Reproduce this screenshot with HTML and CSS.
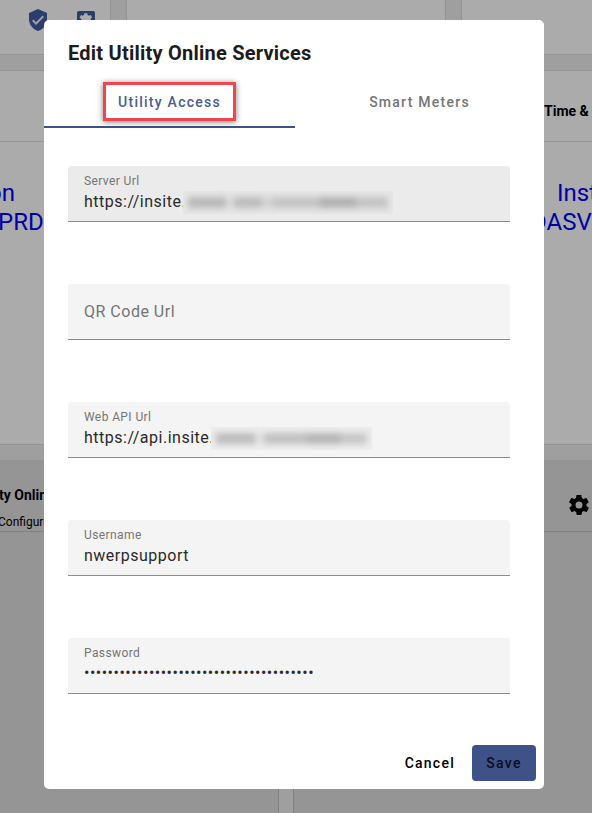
FILE: index.html
```html
<!DOCTYPE html>
<html>
<head>
  <meta charset="utf-8">
  <title>Edit Utility Online Services</title>
  <link rel="stylesheet" href="styles.css">
</head>
<body>
  <!-- page behind the dialog -->
  <div class="page">
    <div class="row row-top">
      <div class="card card-left">
        <div class="top-icons">
          <svg class="top-icon" viewBox="0 0 24 24">
            <path class="icon-fill" d="M12 1 3 5v6c0 5.600 3.800 10.700 9 12 5.200-1.300 9-6.400 9-12V5l-9-4z"/>
            <path class="icon-check" d="M10 17l-4-4 1.400-1.400 2.600 2.600 6.600-6.600L18 9l-8 8z"/>
          </svg>
          <svg class="top-icon" viewBox="0 0 24 24">
            <path class="icon-fill" d="M19 3H5a2 2 0 0 0-2 2v14a2 2 0 0 0 2 2h14a2 2 0 0 0 2-2V5a2 2 0 0 0-2-2zm-1.800 9c0 .2 0 .5-.1.700l1.500 1.200-1.500 2.500-1.800-.7c-.4.300-.8.500-1.200.7l-.3 1.900h-3l-.3-1.900c-.4-.2-.8-.4-1.200-.7l-1.800.7-1.500-2.500 1.500-1.200c-.1-.5-.1-.9 0-1.400L5.500 9.600 7 7.100l1.800.7c.4-.3.800-.5 1.200-.7l.3-1.900h3l.3 1.900c.4.200.8.400 1.200.7l1.800-.7 1.500 2.500-1.500 1.200c.1.200.1.500.1.700z"/>
          </svg>
        </div>
      </div>
      <div class="gap"></div>
      <div class="card card-mid"></div>
      <div class="gap"></div>
      <div class="card card-right"></div>
    </div>
    <div class="band"></div>
    <div class="row row-second">
      <div class="card card-left">
        <div class="card-head"></div>
        <div class="big-text">
          <span class="big-on">on</span>
          <span class="big-prd">PRDO</span>
        </div>
      </div>
      <div class="gap"></div>
      <div class="card card-mid"></div>
      <div class="gap"></div>
      <div class="card card-right">
        <div class="card-head"><span class="head-title title-time">Time &amp;</span></div>
        <div class="big-text">
          <span class="big-inst">Inst</span>
          <span class="big-asv">DASV</span>
        </div>
      </div>
    </div>
    <div class="band"></div>
    <div class="row row-third">
      <div class="card card-half">
        <div class="card-head head-tall">
          <span class="head-title title-online">ty Onlin</span>
          <span class="head-sub">Configure</span>
        </div>
      </div>
      <div class="gap"></div>
      <div class="card card-right">
        <div class="card-head head-gear">
          <svg class="icon-gear" viewBox="0 0 24 24"><path d="M19.400 13c.1-.3.1-.7.1-1s0-.7-.1-1l2.100-1.600c.2-.2.200-.4.100-.6l-2-3.500c-.1-.2-.4-.3-.6-.2l-2.500 1c-.5-.4-1.100-.7-1.700-1l-.4-2.700c0-.2-.2-.4-.5-.4h-4c-.3 0-.5.200-.5.400l-.4 2.700c-.6.300-1.200.6-1.700 1l-2.500-1c-.2-.1-.5 0-.6.200l-2 3.500c-.1.200-.1.400.1.600L4.600 11c-.1.300-.1.700-.1 1s0 .7.1 1l-2.100 1.600c-.2.200-.2.400-.1.600l2 3.500c.1.200.4.300.6.200l2.500-1c.5.400 1.100.7 1.700 1l.4 2.700c0 .2.200.4.500.4h4c.3 0 .5-.2.500-.4l.4-2.700c.6-.3 1.200-.6 1.700-1l2.500 1c.2.100.5 0 .6-.2l2-3.500c.1-.2.100-.4-.1-.6L19.400 13zM12 15.500a3.500 3.500 0 1 1 0-7 3.500 3.500 0 0 1 0 7z"/></svg>
        </div>
      </div>
    </div>
  </div>

  <div class="overlay"></div>

  <div class="dialog">
    <h2 class="dialog-title">Edit Utility Online Services</h2>
    <div class="tabs">
      <div class="tab tab-active"><span class="tab-mark">Utility Access</span></div>
      <div class="tab tab-second">Smart Meters</div>
    </div>
    <div class="fields">
      <div class="field field-hover">
        <label>Server Url</label>
        <div class="value">https://insite.<span class="blur blur-server"><span class="blur-ink ink-server"></span></span></div>
      </div>
      <div class="field field-empty">
        <label>QR Code Url</label>
      </div>
      <div class="field">
        <label>Web API Url</label>
        <div class="value">https://api.insite.<span class="blur blur-api"><span class="blur-ink ink-api"></span></span></div>
      </div>
      <div class="field">
        <label>Username</label>
        <div class="value">nwerpsupport</div>
      </div>
      <div class="field">
        <label>Password</label>
        <div class="value value-dots">•••••••••••••••••••••••••••••••••••••••</div>
      </div>
    </div>
    <div class="actions">
      <button class="btn btn-cancel">Cancel</button>
      <button class="btn btn-save">Save</button>
    </div>
  </div>
</body>
</html>
```

FILE: styles.css
```css
* {
  box-sizing: border-box;
}
html, body {
  margin: 0;
  height: 100%;
  overflow: hidden;
}
body {
  width: 592px;
  height: 813px;
  font-family: Roboto, "Liberation Sans", sans-serif;
  background: #fff;
  position: relative;
}

/* page behind */
.page {
  height: 813px;
  background: #eee;
  display: flex;
  flex-direction: column;
}
.row {
  display: flex;
}
.row-top { height: 54px; }
.row-second { height: 373px; }
.row-third { flex: 1; }
.band {
  height: 17px;
  background: #eee;
  border-top: 1px solid #dcdcdc;
  border-bottom: 1px solid #dcdcdc;
}
.gap {
  width: 17px;
  background: #eee;
  border-left: 1px solid #dcdcdc;
  border-right: 1px solid #dcdcdc;
}
.row-third .gap {
  width: 16px;
  border-color: #c0c0c0;
}
.card { background: #fff; overflow: hidden; }
.card-left { width: 110px; }
.card-mid { width: 318px; }
.card-right { flex: 1; }
.card-half { width: 278px; }
.row-third .card { background: #dedede; }
.top-icons {
  display: flex;
  gap: 24px;
  padding: 8px 0 0 26px;
}
.top-icon {
  width: 24px;
  height: 24px;
}
.icon-fill { fill: #405ba3; }
.icon-check { fill: #f0f0f0; }
.card-head {
  height: 71px;
  border-bottom: 1px solid #e2e2e2;
  padding-top: 32px;
}
.head-title {
  display: block;
  font-size: 14px;
  line-height: 16px;
  font-weight: 700;
  color: #000;
  white-space: nowrap;
}
.title-time { margin-left: 82px; }
.title-online { margin-left: -1px; }
.big-text {
  font-size: 24px;
  line-height: 29px;
  color: #0000ff;
  white-space: nowrap;
  padding-top: 37px;
}
.big-text span { display: block; }
.big-on { margin-left: -12px; }
.big-prd { margin-left: -2px; }
.big-inst { margin-left: 95px; }
.big-asv { margin-left: 69px; }
.row-third .card-head { border-bottom-color: #c0c0c0; }
.head-tall { padding-top: 26px; }
.head-sub {
  display: block;
  font-size: 12px;
  line-height: 14px;
  margin: 12px 0 0 -2px;
  color: #000;
  white-space: nowrap;
}
.head-gear {
  display: flex;
  justify-content: flex-end;
  padding: 32px 1px 0 0;
}
.icon-gear {
  width: 24px;
  height: 24px;
  fill: #000;
}

.overlay {
  position: absolute;
  inset: 0;
  background: rgba(0, 0, 0, 0.33);
}

/* dialog */
.dialog {
  position: absolute;
  left: 44px;
  top: 20px;
  width: 500px;
  height: 769px;
  background: #fff;
  border-radius: 5px;
  display: flex;
  flex-direction: column;
  padding: 0 8px 8px 0;
}
.dialog-title {
  margin: 0;
  padding: 20px 0 0 24px;
  height: 60px;
  font-size: 20px;
  line-height: 26px;
  font-weight: 700;
  color: #1c1c1c;
  letter-spacing: 0.23px;
}
.tabs {
  display: flex;
  height: 48px;
}
.tab {
  flex: 0 0 249px;
  display: flex;
  align-items: center;
  justify-content: center;
  padding-bottom: 4px;
  font-size: 14px;
  font-weight: 500;
  letter-spacing: 1.25px;
  color: #757575;
}
.tab-active {
  flex-basis: 251px;
  color: #4a5d92;
  border-bottom: 2px solid #3f5287;
}
.tab-mark {
  border: 3px solid #f2444c;
  box-shadow: 0 1px 6px rgba(0, 0, 0, 0.5);
  padding: 7px 12px 6px 12px;
  background: #fff;
  line-height: 20px;
}
.fields {
  display: flex;
  flex-direction: column;
  gap: 62px;
  padding: 38px 0 0 24px;
  flex: 1;
}
.field {
  width: 442px;
  height: 56px;
  background: #f4f4f4;
  border-radius: 4px 4px 0 0;
  border-bottom: 1px solid #8c8c8c;
  padding: 8px 16px 0;
}
.field-hover { background: #ebebeb; }
.field label {
  display: block;
  font-size: 12px;
  line-height: 14px;
  letter-spacing: 0.4px;
  color: #757575;
}
.value {
  font-size: 16px;
  line-height: 24px;
  letter-spacing: 0.5px;
  color: #2a2a2a;
  margin-top: 2px;
  white-space: nowrap;
  display: flex;
  align-items: center;
}
.value-dots {
  letter-spacing: 0.5px;
  line-height: 22px;
}
.field-empty { padding-top: 18px; }
.field-empty label {
  font-size: 16px;
  line-height: 20px;
  letter-spacing: 0.5px;
  color: #757575;
}

/* blurred part of the urls */
.blur {
  display: flex;
  align-items: center;
  height: 23px;
  margin-left: -3px;
  padding: 0 5px;
  overflow: hidden;
  background: #e6e6e6;
}
.field:not(.field-hover) .blur { background: #ededed; }
.blur-server { width: 210px; }
.blur-api { width: 161px; }
.blur-ink {
  display: block;
  width: 100%;
  height: 11px;
  filter: blur(3px);
}
.ink-server {
  background: linear-gradient(90deg, #b8b8b8 0 19%, #dcdcdc 19% 23%, #bcbcbc 23% 37%, #d4d4d4 37% 42%, #c4c4c4 42% 66%, #b0b0b0 66% 84%, #c4c4c4 84% 100%);
}
.ink-api {
  background: linear-gradient(90deg, #bcbcbc 0 26%, #e2e2e2 26% 32%, #c0c0c0 32% 60%, #b4b4b4 60% 82%, #c6c6c6 82% 100%);
}

.actions {
  display: flex;
  justify-content: flex-end;
  align-items: center;
  gap: 8px;
  height: 36px;
}
.btn {
  font-family: Roboto, "Liberation Sans", sans-serif;
  font-size: 14px;
  font-weight: 500;
  letter-spacing: 1.25px;
  height: 36px;
  min-width: 64px;
  border: 0;
  border-radius: 4px;
  background: transparent;
  color: #000;
}
.btn-cancel { padding: 0 9px 0 7px; }
.btn-save {
  background: #3f5287;
  color: #0c0c1e;
  padding: 0 14px;
}
```
